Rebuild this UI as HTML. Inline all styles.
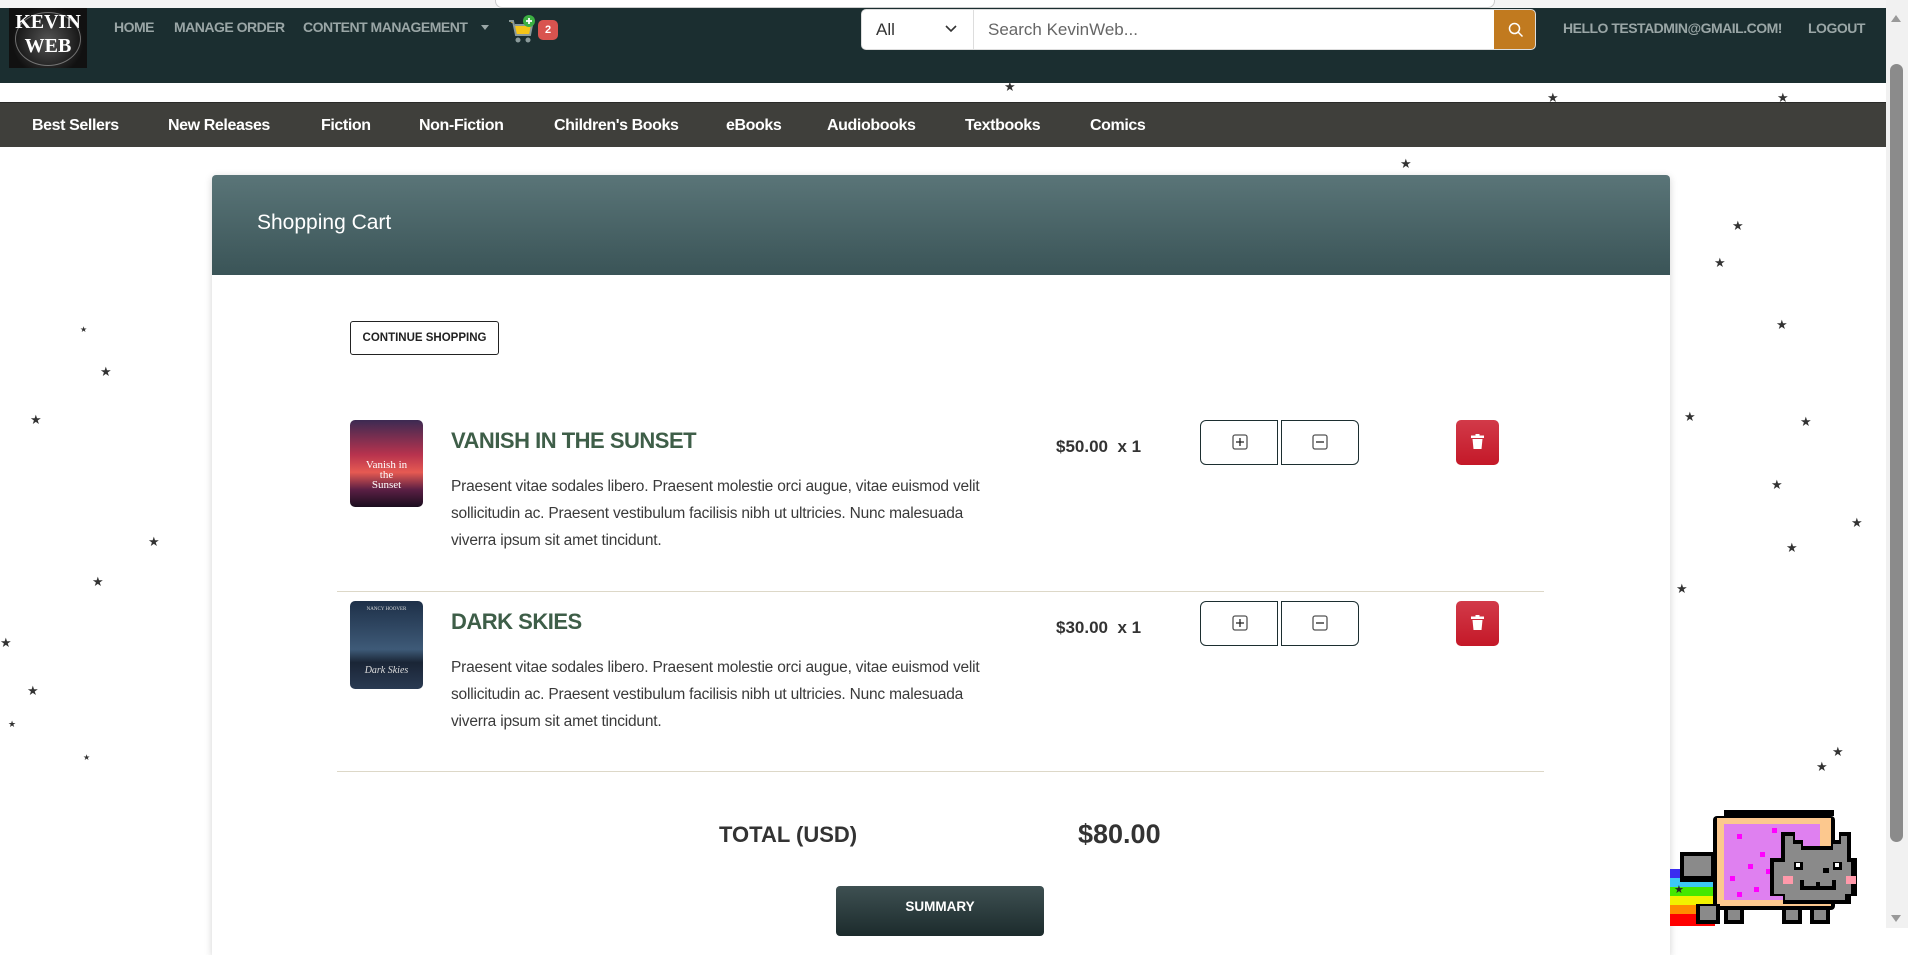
<!DOCTYPE html>
<html><head><meta charset="utf-8"><style>
*{box-sizing:border-box;margin:0;padding:0}
body{width:1908px;height:928px;overflow:hidden;background:#fff;font-family:"Liberation Sans",sans-serif;position:relative}
.abs{position:absolute}
.top{left:0;top:0;width:1908px;height:9px;background:#f4f4f4}
.hdr{left:0;top:8px;width:1886px;height:75px;background:#1b2e30}
.nl{top:19px;font-size:14px;font-weight:bold;color:#9aa6a6;letter-spacing:-0.5px;white-space:nowrap}
.nav{left:0;top:102px;width:1886px;height:45px;background:#3f3f3b;border-top:1px solid #2a2a28}
.ni{top:14px;color:#fff;font-weight:bold;font-size:16px;letter-spacing:-0.4px;white-space:nowrap}
.star{color:#333;font-size:13px;line-height:1}
.card{left:212px;top:175px;width:1458px;height:780px;background:#fff;box-shadow:0 2px 8px rgba(0,0,0,.18);border-radius:4px 4px 0 0}
.ch{left:0;top:0;width:1458px;height:100px;background:linear-gradient(#5a7578,#3a5457);border-radius:4px 4px 0 0}
.title{font-size:22px;font-weight:bold;color:#3e5e48;letter-spacing:-0.5px}
.desc{font-size:15.5px;color:#3a3a3a;line-height:27px;width:560px;letter-spacing:-0.2px}
.price{font-size:17px;font-weight:bold;color:#333}
.qb{width:78px;height:45px;border:1.5px solid #1c2e30;background:#fff}
.trash{width:43px;height:45px;border-radius:5px;background:linear-gradient(#d23a49,#c41828)}
.hr{height:1px;background:#ddd8c8;left:337px;width:1207px}
</style></head><body>
<div class="abs top"><div class="abs" style="left:495px;top:-6px;width:1000px;height:14px;border:1px solid #ccc;border-radius:8px;background:#fff"></div></div>
<div class="abs hdr"></div>
<div class="abs" style="left:9px;top:8px;width:78px;height:60px;background:radial-gradient(circle at 50% 55%,#555,#111 70%);">
<div style="position:absolute;left:6px;top:4px;width:66px;height:54px;border:1.5px solid #aaa;border-radius:50%;opacity:.6"></div>
<div style="position:absolute;left:0;width:78px;top:2px;text-align:center;color:#fff;font-family:'Liberation Serif',serif;font-weight:bold;font-size:20px;line-height:24px">KEVIN<br>WEB</div></div>
<div class="abs nl" style="left:114px">HOME</div>
<div class="abs nl" style="left:174px">MANAGE ORDER</div>
<div class="abs nl" style="left:303px">CONTENT MANAGEMENT</div>
<div class="abs" style="left:481px;top:25px;border:4px solid transparent;border-top:5px solid #9aa6a6"></div>
<svg class="abs" style="left:507px;top:14px" width="30" height="30" viewBox="0 0 30 30"><path d="M2 7h4l3 14h14l2-10H8" fill="#f5c518" stroke="#8a9a9a" stroke-width="2"/><circle cx="11" cy="26" r="2.5" fill="#8a9a9a"/><circle cx="21" cy="26" r="2.5" fill="#8a9a9a"/><circle cx="22" cy="7" r="6" fill="#3cb043"/><path d="M22 4v6M19 7h6" stroke="#fff" stroke-width="1.8"/></svg>
<div class="abs" style="left:538px;top:20px;width:20px;height:20px;background:#d9534f;border-radius:5px;color:#fff;font-size:11px;font-weight:bold;text-align:center;line-height:20px">2</div>
<div class="abs" style="left:861px;top:9px;width:675px;height:41px;background:#fff;border-radius:5px;overflow:hidden;border:1px solid #ddd">
<div class="abs" style="left:14px;top:10px;font-size:17px;color:#333">All</div>
<svg class="abs" style="left:83px;top:15px" width="12" height="9"><path d="M1 1l5 5 5-5" fill="none" stroke="#333" stroke-width="1.6"/></svg>
<div class="abs" style="left:111px;top:0;width:1px;height:41px;background:#ddd"></div>
<div class="abs" style="left:126px;top:10px;font-size:17px;color:#666">Search KevinWeb...</div>
<div class="abs" style="left:632px;top:0;width:43px;height:41px;background:#c17a1f"><svg style="margin:12px 0 0 14px" width="16" height="16"><circle cx="6.5" cy="6.5" r="5" fill="none" stroke="#fff" stroke-width="1.5"/><path d="M10 10l4.5 4.5" stroke="#fff" stroke-width="1.5"/></svg></div></div>
<div class="abs nl" style="left:1563px;top:20px">HELLO TESTADMIN@GMAIL.COM!</div>
<div class="abs nl" style="left:1808px;top:20px">LOGOUT</div>
<div class="abs" style="left:1886px;top:0;width:22px;height:928px;background:#f1f1f1"></div>
<div class="abs" style="left:1890px;top:64px;width:13px;height:778px;background:#8b8b8b;border-radius:7px"></div>
<div class="abs" style="left:1891px;top:15px;border:5.5px solid transparent;border-bottom:7px solid #999;border-top:0"></div>
<div class="abs" style="left:1891px;top:915px;border:5.5px solid transparent;border-top:7px solid #999;border-bottom:0"></div>
<div class="abs nav">
<div class="abs ni" style="left:32px">Best Sellers</div>
<div class="abs ni" style="left:168px">New Releases</div>
<div class="abs ni" style="left:321px">Fiction</div>
<div class="abs ni" style="left:419px">Non-Fiction</div>
<div class="abs ni" style="left:554px">Children's Books</div>
<div class="abs ni" style="left:726px">eBooks</div>
<div class="abs ni" style="left:827px">Audiobooks</div>
<div class="abs ni" style="left:965px">Textbooks</div>
<div class="abs ni" style="left:1090px">Comics</div>
</div>
<div class="abs star" style="left:1004px;top:80px">★</div>
<div class="abs star" style="left:1547px;top:91px">★</div>
<div class="abs star" style="left:1777px;top:91px">★</div>
<div class="abs star" style="left:1400px;top:157px">★</div>
<div class="abs star" style="left:1732px;top:219px">★</div>
<div class="abs star" style="left:1714px;top:256px">★</div>
<div class="abs star" style="left:1776px;top:318px">★</div>
<div class="abs star" style="left:1800px;top:415px">★</div>
<div class="abs star" style="left:1684px;top:410px">★</div>
<div class="abs star" style="left:1771px;top:478px">★</div>
<div class="abs star" style="left:1851px;top:516px">★</div>
<div class="abs star" style="left:1786px;top:541px">★</div>
<div class="abs star" style="left:1676px;top:582px">★</div>
<div class="abs star" style="left:1816px;top:760px">★</div>
<div class="abs star" style="left:1832px;top:745px">★</div>
<div class="abs star" style="left:100px;top:365px">★</div>
<div class="abs star" style="left:30px;top:413px">★</div>
<div class="abs star" style="left:148px;top:535px">★</div>
<div class="abs star" style="left:92px;top:575px">★</div>
<div class="abs star" style="left:27px;top:684px">★</div>
<div class="abs star" style="left:0px;top:636px">★</div>
<div class="abs star" style="left:8px;top:720px;font-size:9px">★</div>
<div class="abs star" style="left:80px;top:326px;font-size:8px">★</div>
<div class="abs star" style="left:83px;top:754px;font-size:8px">★</div>
<div class="abs card">
<div class="abs ch"><div class="abs" style="left:45px;top:36px;color:#fff;font-size:21px">Shopping Cart</div></div>
<div class="abs" style="left:138px;top:146px;width:149px;height:34px;border:1px solid #222;border-radius:3px;font-size:11.5px;font-weight:bold;color:#222;text-align:center;line-height:32px">CONTINUE SHOPPING</div>
</div>
<div class="abs hr" style="top:591px"></div>
<div class="abs hr" style="top:771px"></div>
<div class="abs" style="left:350px;top:420px;width:73px;height:87px;border-radius:5px;background:linear-gradient(#3c2a52 0%,#b8334e 40%,#e65a52 60%,#5b1f44 80%,#1a0d1e);overflow:hidden">
<div style="position:absolute;top:40px;width:73px;text-align:center;color:#fff;font-family:'Liberation Serif',serif;font-size:11px;line-height:10px">Vanish in<br>the<br>Sunset</div></div>
<div class="abs title" style="left:451px;top:428px">VANISH IN THE SUNSET</div>
<div class="abs desc" style="left:451px;top:473px">Praesent vitae sodales libero. Praesent molestie orci augue, vitae euismod velit sollicitudin ac. Praesent vestibulum facilisis nibh ut ultricies. Nunc malesuada viverra ipsum sit amet tincidunt.</div>
<div class="abs price" style="left:1056px;top:437px">$50.00 &nbsp;x 1</div>
<div class="abs" style="left:350px;top:601px;width:73px;height:88px;border-radius:5px;background:linear-gradient(#1e3048,#3e5a78 55%,#1a2536 70%,#2a3a52);overflow:hidden">
<div style="position:absolute;top:6px;width:73px;text-align:center;color:#ddd;font-family:'Liberation Serif',serif;font-size:5px">NANCY HOOVER</div>
<div style="position:absolute;top:64px;width:73px;text-align:center;color:#ddd;font-family:'Liberation Serif',serif;font-style:italic;font-size:10px">Dark Skies</div></div>
<div class="abs title" style="left:451px;top:609px">DARK SKIES</div>
<div class="abs desc" style="left:451px;top:654px">Praesent vitae sodales libero. Praesent molestie orci augue, vitae euismod velit sollicitudin ac. Praesent vestibulum facilisis nibh ut ultricies. Nunc malesuada viverra ipsum sit amet tincidunt.</div>
<div class="abs price" style="left:1056px;top:618px">$30.00 &nbsp;x 1</div>
<div class="abs qb" style="left:1200px;top:420px;border-radius:6px 0 0 6px"></div>
<div class="abs qb" style="left:1281px;top:420px;border-radius:0 6px 6px 0"></div>
<div class="abs qb" style="left:1200px;top:601px;border-radius:6px 0 0 6px"></div>
<div class="abs qb" style="left:1281px;top:601px;border-radius:0 6px 6px 0"></div>
<svg class="abs" style="left:1232px;top:434px" width="16" height="16"><rect x="1" y="1" width="14" height="14" rx="2" fill="none" stroke="#555" stroke-width="1.3"/><path d="M8 4v8M4 8h8" stroke="#222" stroke-width="1.3"/></svg>
<svg class="abs" style="left:1312px;top:434px" width="16" height="16"><rect x="1" y="1" width="14" height="14" rx="2" fill="none" stroke="#555" stroke-width="1.3"/><path d="M4 8h8" stroke="#222" stroke-width="1.3"/></svg>
<svg class="abs" style="left:1232px;top:615px" width="16" height="16"><rect x="1" y="1" width="14" height="14" rx="2" fill="none" stroke="#555" stroke-width="1.3"/><path d="M8 4v8M4 8h8" stroke="#222" stroke-width="1.3"/></svg>
<svg class="abs" style="left:1312px;top:615px" width="16" height="16"><rect x="1" y="1" width="14" height="14" rx="2" fill="none" stroke="#555" stroke-width="1.3"/><path d="M4 8h8" stroke="#222" stroke-width="1.3"/></svg>
<div class="abs trash" style="left:1456px;top:420px"><svg style="margin:14px 0 0 15px" width="13" height="16"><rect x="0" y="1.5" width="13" height="2.5" fill="#fff"/><rect x="4.5" y="0" width="4" height="2" fill="#fff"/><path d="M1.5 5h10l-1 10h-8z" fill="#fff"/></svg></div>
<div class="abs trash" style="left:1456px;top:601px"><svg style="margin:14px 0 0 15px" width="13" height="16"><rect x="0" y="1.5" width="13" height="2.5" fill="#fff"/><rect x="4.5" y="0" width="4" height="2" fill="#fff"/><path d="M1.5 5h10l-1 10h-8z" fill="#fff"/></svg></div>
<div class="abs" style="left:719px;top:822px;font-size:22px;font-weight:bold;color:#333">TOTAL (USD)</div>
<div class="abs" style="left:1078px;top:819px;font-size:27px;font-weight:bold;color:#333">$80.00</div>
<div class="abs" style="left:836px;top:886px;width:208px;height:50px;border-radius:4px;background:linear-gradient(#3e5052,#1c2b2c);color:#fff;font-weight:bold;font-size:13.5px;text-align:center;line-height:42px">SUMMARY</div>
<svg class="abs" style="left:1650px;top:780px" width="236" height="148" viewBox="0 0 236 148">
<rect x="20" y="89" width="45" height="9" fill="#3a2bf0"/>
<rect x="20" y="98" width="45" height="9" fill="#3cc8f5"/>
<rect x="20" y="107" width="45" height="9" fill="#44e800"/>
<rect x="20" y="116" width="45" height="9" fill="#f2f200"/>
<rect x="20" y="125" width="45" height="9" fill="#ff8c00"/>
<rect x="20" y="134" width="45" height="12" fill="#f00"/>
<rect x="30" y="72" width="35" height="30" fill="#000"/><rect x="34" y="76" width="27" height="20" fill="#8a8a8a"/>
<rect x="74" y="30" width="110" height="6" fill="#000"/>
<rect x="63" y="36" width="122" height="94" rx="4" fill="#000"/>
<rect x="67" y="38" width="114" height="88" fill="#fcc88e"/>
<rect x="74" y="44" width="96" height="76" fill="#df80f0"/>
<rect x="87" y="54" width="5" height="5" fill="#f0f"/><rect x="122" y="48" width="5" height="5" fill="#f0f"/><rect x="110" y="72" width="5" height="5" fill="#f0f"/><rect x="98" y="84" width="5" height="5" fill="#f0f"/><rect x="80" y="96" width="5" height="5" fill="#f0f"/><rect x="104" y="107" width="5" height="5" fill="#f0f"/><rect x="87" y="112" width="5" height="5" fill="#f0f"/><rect x="116" y="89" width="5" height="5" fill="#f0f"/>
<path d="M131 52h14v8h8v6h28v-6h8v-8h12v26h6v38h-6v8H133v-8h-13V78h11z" fill="#000"/>
<path d="M135 56h8v8h8v6h32v-6h8v-8h6v26h4v32h-6v6H135v-6h-11V82h11z" fill="#8a8a8a"/>
<rect x="144" y="82" width="9" height="8" fill="#000"/><rect x="146" y="83" width="4" height="4" fill="#fff"/>
<rect x="183" y="82" width="9" height="8" fill="#000"/><rect x="185" y="83" width="4" height="4" fill="#fff"/>
<rect x="173" y="88" width="6" height="5" fill="#000"/>
<rect x="133" y="96" width="10" height="8" fill="#f9a"/><rect x="196" y="96" width="10" height="8" fill="#f9a"/>
<path d="M150 100h4v6h12v-4h4v4h12v-6h4v10h-36z" fill="#000"/>
<rect x="46" y="124" width="24" height="20" fill="#000"/><rect x="50" y="126" width="16" height="14" fill="#8a8a8a"/>
<rect x="74" y="128" width="20" height="16" fill="#000"/><rect x="78" y="130" width="12" height="10" fill="#8a8a8a"/>
<rect x="132" y="128" width="20" height="16" fill="#000"/><rect x="136" y="130" width="12" height="10" fill="#8a8a8a"/>
<rect x="160" y="128" width="20" height="16" fill="#000"/><rect x="164" y="130" width="12" height="10" fill="#8a8a8a"/>
<text x="24" y="113" font-size="11" fill="#222">★</text>
</svg>
</body></html>
